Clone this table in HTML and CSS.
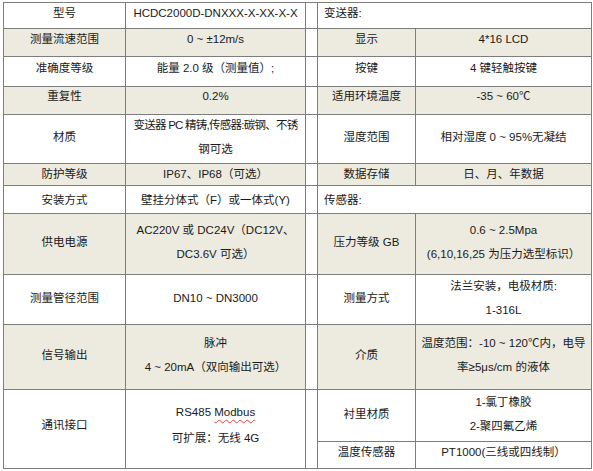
FILE: index.html
```html
<!DOCTYPE html>
<html lang="zh-CN">
<head>
<meta charset="utf-8">
<title>规格参数</title>
<link rel="stylesheet" href="styles.css">
</head>
<body>
<table class="spec">
  <colgroup>
    <col class="c1"><col class="c2"><col class="c3"><col class="c4"><col class="c5">
  </colgroup>
  <tr class="ra">
    <td>型号</td>
    <td>HCDC2000D-DNXXX-X-XX-X-X</td>
    <td class="sp"></td>
    <td colspan="2" class="left">变送器:</td>
  </tr>
  <tr class="rb shade">
    <td>测量流速范围</td>
    <td>0 ~ ±12m/s</td>
    <td class="sp"></td>
    <td>显示</td>
    <td>4*16 LCD</td>
  </tr>
  <tr class="rc">
    <td>准确度等级</td>
    <td>能量 2.0 级（测量值）;</td>
    <td class="sp"></td>
    <td>按键</td>
    <td>4 键轻触按键</td>
  </tr>
  <tr class="rd shade">
    <td>重复性</td>
    <td>0.2%</td>
    <td class="sp"></td>
    <td>适用环境温度</td>
    <td>-35 ~ 60℃</td>
  </tr>
  <tr class="re">
    <td>材质</td>
    <td class="multi"><div class="ml"><span class="tight">变送器 PC 精铸,传感器:碳钢、不锈</span><br>钢可选</div></td>
    <td class="sp"></td>
    <td>湿度范围</td>
    <td>相对湿度 0 ~ 95%无凝结</td>
  </tr>
  <tr class="rf shade">
    <td>防护等级</td>
    <td>IP67、IP68（可选）</td>
    <td class="sp"></td>
    <td>数据存储</td>
    <td>日、月、年数据</td>
  </tr>
  <tr class="rg">
    <td>安装方式</td>
    <td>壁挂分体式（F）或一体式(Y)</td>
    <td class="sp"></td>
    <td colspan="2" class="left">传感器:</td>
  </tr>
  <tr class="rh shade">
    <td>供电电源</td>
    <td class="multi"><div class="ml">AC220V 或 DC24V（DC12V、<br>DC3.6V 可选）</div></td>
    <td class="sp"></td>
    <td>压力等级 GB</td>
    <td class="multi"><div class="ml">0.6 ~ 2.5Mpa<br>(6,10,16,25 为压力选型标识）</div></td>
  </tr>
  <tr class="ri">
    <td>测量管径范围</td>
    <td>DN10 ~ DN3000</td>
    <td class="sp"></td>
    <td>测量方式</td>
    <td class="multi"><div class="ml">法兰安装，电极材质:<br>1-316L</div></td>
  </tr>
  <tr class="rj shade">
    <td>信号输出</td>
    <td class="multi"><div class="ml">脉冲<br>4 ~ 20mA（双向输出可选）</div></td>
    <td class="sp"></td>
    <td>介质</td>
    <td class="multi"><div class="ml">温度范围：-10 ~ 120℃内，电导<br>率≥5μs/cm 的液体</div></td>
  </tr>
  <tr class="rk">
    <td rowspan="2" class="tall">通讯接口</td>
    <td rowspan="2" class="multi"><div class="ml wide">RS485 <span class="spell">Modbus</span><br>可扩展：无线 4G</div></td>
    <td rowspan="2" class="sp"></td>
    <td>衬里材质</td>
    <td class="multi"><div class="ml">1-氯丁橡胶<br>2-聚四氟乙烯</div></td>
  </tr>
  <tr class="rl">
    <td>温度传感器</td>
    <td>PT1000(三线或四线制）</td>
  </tr>
</table>
</body>
</html>
```

FILE: styles.css
```css
html, body {
  margin: 0;
  padding: 0;
  background: #ffffff;
}

body {
  font-family: "Liberation Sans", "Noto Sans CJK SC", sans-serif;
  font-size: 11.5px;
  color: #1a1a1a;
}

.spec {
  border-collapse: collapse;
  table-layout: fixed;
  width: 588px;
  margin: 2px 0 0 3px;
}

.c1 { width: 122px; }
.c2 { width: 180px; }
.c3 { width: 12px; }
.c4 { width: 98px; }
.c5 { width: 176px; }

.spec td {
  border: 1px solid #7d7d7d;
  text-align: center;
  vertical-align: middle;
  padding: 0 1px 4px;
  line-height: 16px;
  white-space: nowrap;
  overflow: visible;
}

.spec td.multi {
  padding-bottom: 0;
}

.ml {
  line-height: 24px;
  margin: -2px 0 2px;
}

.ml.wide {
  line-height: 26px;
  margin: -4px 0 4px;
}

.tight {
  letter-spacing: -0.75px;
}

.shade td {
  background: #edeadf;
}

.shade td.sp {
  background: #ffffff;
}

.spec td.left {
  text-align: left;
  padding-left: 6px;
}

.spell {
  text-decoration: underline wavy #e0403a;
  text-decoration-thickness: 1px;
  text-underline-offset: 3px;
}

.ra { height: 26px; }
.rb { height: 28px; }
.rc { height: 30px; }
.rd { height: 28px; }
.re { height: 48px; }
.rf { height: 22px; }
.rg { height: 28px; }
.rh { height: 61px; }
.ri { height: 50px; }
.rj { height: 65px; }
.rk { height: 52px; }
.rl { height: 27px; }

.ra td { padding-bottom: 6px; }
.rb td { padding-bottom: 8px; }
.rc td { padding-bottom: 8px; }
.rd td { padding-bottom: 10px; }
.rf td { padding-bottom: 2px; }
.rg td { padding-bottom: 0; }
.rl td { padding-bottom: 7px; }
.spec td.tall { padding-bottom: 9px; }
```
